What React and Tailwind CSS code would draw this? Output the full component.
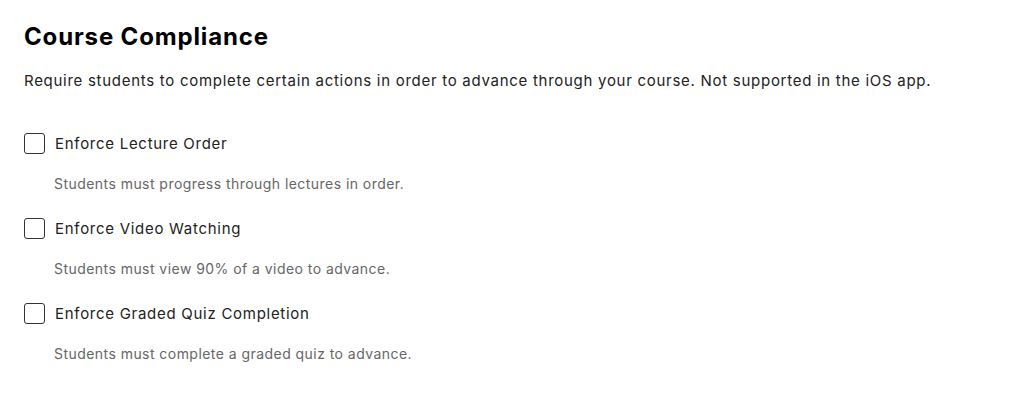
export default function App() {
  const items = [
    ["Enforce Lecture Order", "Students must progress through lectures in order."],
    ["Enforce Video Watching", "Students must view 90% of a video to advance."],
    ["Enforce Graded Quiz Completion", "Students must complete a graded quiz to advance."],
  ];
  return (
    <div className="w-[1024px] h-[412px] bg-white px-6 pt-[21px]" style={{ fontFamily: "Inter, 'Noto Sans', sans-serif" }}>
      <h2 className="text-[24px] leading-[32px] font-bold text-black tracking-[0.85px]">Course Compliance</h2>
      <p className="mt-[18px] text-[15px] leading-[20px] text-[#222] tracking-[0.72px]">Require students to complete certain actions in order to advance through your course. Not supported in the iOS app.</p>
      <div className="mt-[42px] flex flex-col gap-[24px]">
        {items.map(([label, desc]) => (
          <div key={label} className="flex flex-col">
            <label className="flex items-center gap-[10px] h-[21px]">
              <span className="w-[21px] h-[21px] rounded-[3px] border-[1.5px] border-[#333] bg-white shrink-0" />
              <span className="text-[15px] leading-[21px] text-[#222] tracking-[0.72px]">{label}</span>
            </label>
            <p className="mt-[20px] ml-[30px] text-[14px] leading-[20px] text-[#666] tracking-[0.45px]">{desc}</p>
          </div>
        ))}
      </div>
    </div>
  );
}
